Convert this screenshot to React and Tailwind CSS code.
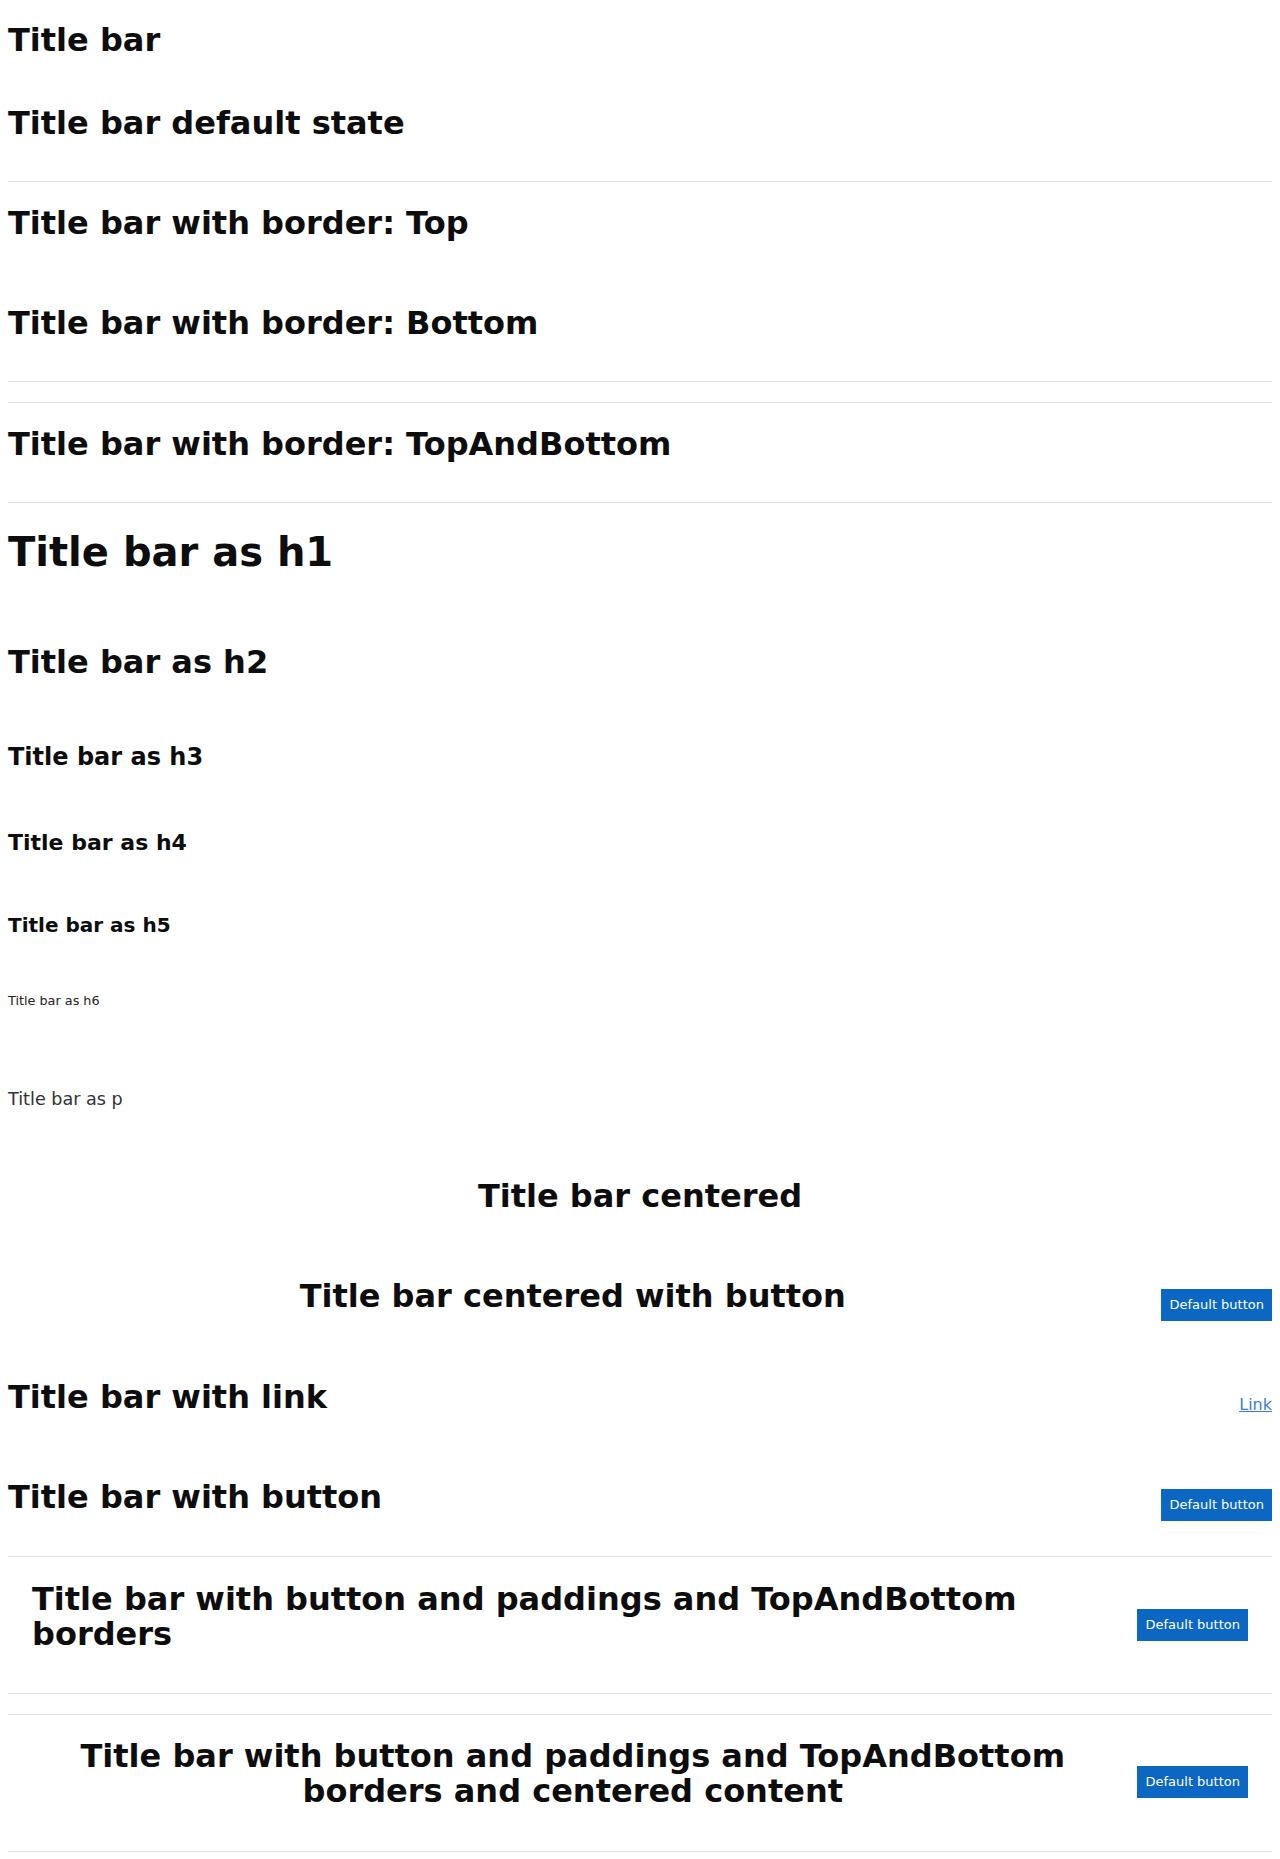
import React from "react";

const line = "border-[#e2e2e2]";

function Btn() {
  return (
    <button
      type="button"
      className="shrink-0 h-8 px-2 bg-[#0b67c2] text-white text-[13px] leading-4 font-normal"
    >
      Default button
    </button>
  );
}

function LinkEl() {
  return (
    <a href="#" className="shrink-0 text-[16px] leading-6 text-[#3b7bd6] underline font-normal">
      Link
    </a>
  );
}

function Bar({ children, top, bottom, centered, right, padded, loose, tight, className = "" }) {
  return (
    <div
      className={
        "flex items-center gap-6 " +
        (padded && !tight ? "pt-[25px] " : "pt-6 ") +
        (loose || padded ? "pb-[25px] " : "pb-6 ") +
        (top ? "border-t " + line + " " : "") +
        (bottom ? "border-b " + line + " " : "") +
        (padded ? "px-6 " : "") +
        className
      }
    >
      <div className={"flex-1 min-w-0 " + (centered ? "text-center" : "")}>{children}</div>
      {right}
    </div>
  );
}

const H = ({ children }) => (
  <h2 className="text-[32px] font-bold leading-[1.1] mb-4">{children}</h2>
);

export default function App() {
  return (
    <div className="px-2 pb-2 font-['DejaVu_Sans',sans-serif] text-[#0d0d0d] bg-white">
      <div className="pt-[23px] pb-[24px]">
        <h1 className="text-[32px] font-bold leading-[1.1]">Title bar</h1>
      </div>

      <Bar>
        <H>Title bar default state</H>
      </Bar>
      <Bar top>
        <H>Title bar with border: Top</H>
      </Bar>
      <Bar bottom>
        <H>Title bar with border: Bottom</H>
      </Bar>
      <Bar top bottom className="mt-5">
        <H>Title bar with border: TopAndBottom</H>
      </Bar>

      <Bar>
        <h1 className="text-[40px] font-bold leading-[1.25] mb-5">Title bar as h1</h1>
      </Bar>
      <Bar>
        <h2 className="text-[32px] font-bold leading-[1.1] mb-4">Title bar as h2</h2>
      </Bar>
      <Bar>
        <h3 className="text-[24px] font-bold leading-[1.1] mb-3">Title bar as h3</h3>
      </Bar>
      <Bar>
        <h4 className="text-[22px] font-bold leading-[1.1] mb-[11px]">Title bar as h4</h4>
      </Bar>
      <Bar>
        <h5 className="text-[20px] font-bold leading-[1.1] mb-[10px]">Title bar as h5</h5>
      </Bar>
      <Bar>
        <h6 className="text-[12.8px] font-normal leading-[1.1] mb-[6.4px] text-[#222]">Title bar as h6</h6>
      </Bar>
      <Bar>
        <p className="text-[17.6px] font-normal leading-[27px] mt-[24px] mb-[18px] text-[#333]">Title bar as p</p>
      </Bar>

      <Bar centered loose>
        <H>Title bar centered</H>
      </Bar>
      <Bar centered loose right={<Btn />}>
        <H>Title bar centered with button</H>
      </Bar>
      <Bar loose right={<LinkEl />}>
        <H>Title bar with link</H>
      </Bar>
      <Bar loose right={<Btn />}>
        <H>Title bar with button</H>
      </Bar>

      <Bar top bottom padded right={<Btn />}>
        <H>Title bar with button and paddings and TopAndBottom borders</H>
      </Bar>
      <Bar top bottom padded tight centered right={<Btn />} className="mt-5">
        <H>Title bar with button and paddings and TopAndBottom borders and centered content</H>
      </Bar>
    </div>
  );
}
